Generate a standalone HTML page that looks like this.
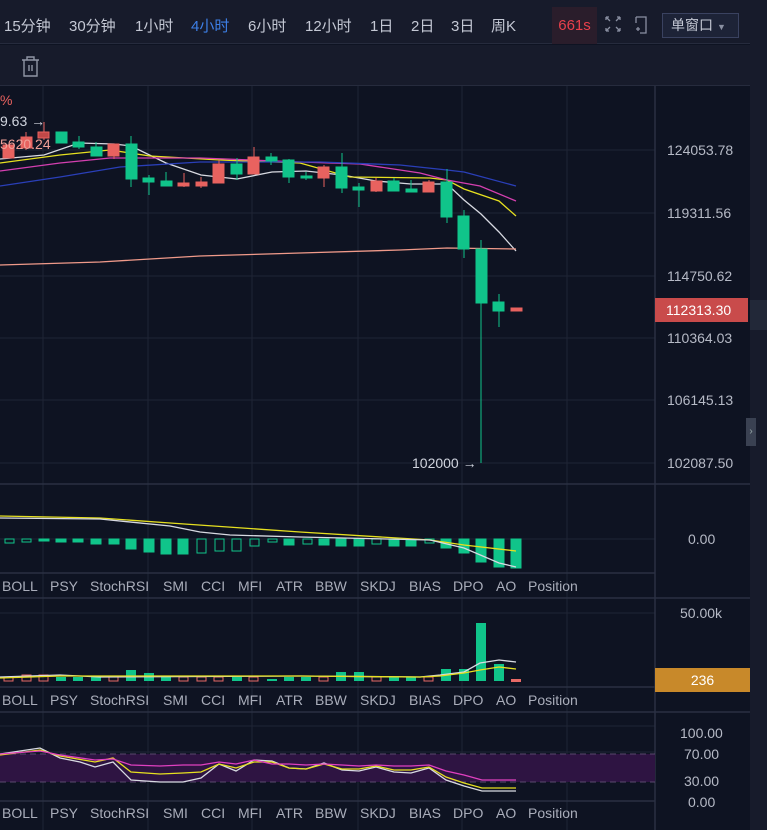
<!DOCTYPE html>
<html><head><meta charset="utf-8"><style>
*{margin:0;padding:0;box-sizing:border-box}
body{width:767px;height:830px;overflow:hidden;background:#0e1322;font-family:"Liberation Sans","Noto Sans CJK SC",sans-serif;position:relative}
.bar{position:absolute;left:0;width:750px;background:#171b2b}
.t{position:absolute;top:15px;font-size:15px;color:#c4c8d4;white-space:nowrap}
.ax{position:absolute;font-size:14px;color:#b6bac6;white-space:nowrap}
.lb{position:absolute;left:0;width:600px;height:20px;font-size:14px;color:#a9adba;white-space:nowrap}
.lb span{position:absolute;top:0}
</style></head><body>
<div class="bar" style="top:0;height:44px;border-bottom:1px solid #262b3d"></div>
<div class="bar" style="top:45px;height:41px;border-bottom:1px solid #262b3d"></div>
<div style="position:absolute;left:750px;top:0;width:17px;height:830px;background:#171b2b"></div>
<div style="position:absolute;left:750px;top:300px;width:17px;height:30px;background:#222838"></div>
<div style="position:absolute;left:746px;top:418px;width:10px;height:28px;background:#3a4152;color:#9aa;font-size:10px;line-height:28px;text-align:center">›</div>
<div class="t" style="left:4px">15分钟</div>
<div class="t" style="left:69px">30分钟</div>
<div class="t" style="left:135px">1小时</div>
<div class="t" style="left:191px;color:#3d7fe6">4小时</div>
<div class="t" style="left:248px">6小时</div>
<div class="t" style="left:305px">12小时</div>
<div class="t" style="left:370px">1日</div>
<div class="t" style="left:411px">2日</div>
<div class="t" style="left:451px">3日</div>
<div class="t" style="left:491px">周K</div>
<div style="position:absolute;left:552px;top:7px;width:45px;height:37px;background:#2a1d2b;color:#e8404c;font-size:15px;line-height:37px;text-align:center">661s</div>
<svg style="position:absolute;left:604px;top:15px" width="50" height="20" fill="none" stroke="#8a90a2" stroke-width="1.3">
<path d="M2 2l4 4M2 2h3M2 2v3M16 2l-4 4M16 2h-3M16 2v3M2 16l4-4M2 16h3M2 16v-3M16 16l-4-4M16 16h-3M16 16v-3"/>
<path d="M32 2h10v16h-6M32 2v6M32 14h4M34 12v4"/>
</svg>
<div style="position:absolute;left:662px;top:13px;width:77px;height:25px;border:1px solid #3a4260;background:#1d2337;color:#c4c8d4;font-size:14px;line-height:23px;padding-left:8px">单窗口<span style="font-size:9px;color:#8a90a2;margin-left:4px">▼</span></div>
<svg style="position:absolute;left:20px;top:55px" width="22" height="24" fill="none" stroke="#9096a6" stroke-width="1.4"><path d="M2 5h17M7 5V2h7v3M4 5v16h13V5M9 10v6M12 10v6"/></svg>

<svg style="position:absolute;left:0;top:86px" width="750" height="744">
<g stroke="#1f2535" stroke-width="1">
<path d="M43 0V744M148 0V744M252 0V744M358 0V744M462 0V744M567 0V744"/>
<path d="M0 64H655M0 127H655M0 190H655M0 252H655M0 314H655M0 377H655"/>
<path d="M0 453H655M0 527H655M0 640H655M0 666H655"/>
</g>
<g stroke="#2a3043" stroke-width="1.5"><path d="M0 398H750M0 487H655M0 512H750M0 601H655M0 626H750M0 715H655M655 0V744"/></g>
<rect x="0" y="668" width="655" height="28" fill="#2e1442"/>
<g stroke="#5a4a6e" stroke-dasharray="6 4"><path d="M0 668H655M0 696H655"/></g>
</svg>

<svg style="position:absolute;left:0;top:0" width="655" height="830">
<g fill="none" stroke-width="1.3">
<polyline stroke="#d8dae2" points="0,159 44,155 79,143 114,144 131,146 166,163 201,175 237,179 272,172 306,171 342,175 376,181 411,184 447,184 464,200 481,214 499,232 516,251"/>
<polyline stroke="#e6e020" points="0,163 60,155 110,150 150,156 220,160 300,163 350,177 430,178 447,180 464,189 499,201 516,216"/>
<polyline stroke="#d43fb0" points="0,171 60,163 110,158 200,158 300,162 360,164 420,173 447,180 480,186 516,201"/>
<polyline stroke="#2a3fb8" points="0,186 60,177 120,167 200,162 320,162 400,165 447,170 464,172 516,186"/>
<polyline stroke="#f09a8a" points="0,265 100,262 200,256 300,253 400,250 447,248 516,249"/>
</g>
<g fill="#10c48a" stroke="#10c48a">
<rect x="5" y="539" width="9" height="4" fill="none"/><rect x="22" y="539" width="9" height="3" fill="none"/>
<rect x="39" y="539" width="10" height="2"/><rect x="56" y="539" width="10" height="3"/><rect x="73" y="539" width="10" height="3"/><rect x="91" y="539" width="10" height="5"/><rect x="109" y="539" width="10" height="5"/>
<rect x="126" y="539" width="10" height="10"/><rect x="144" y="539" width="10" height="13"/><rect x="161" y="539" width="10" height="15"/><rect x="178" y="539" width="10" height="15"/>
<rect x="197" y="539" width="9" height="14" fill="none"/><rect x="215" y="539" width="9" height="12" fill="none"/><rect x="232" y="539" width="9" height="12" fill="none"/><rect x="250" y="539" width="9" height="7" fill="none"/><rect x="268" y="539" width="9" height="3" fill="none"/>
<rect x="284" y="539" width="10" height="6"/><rect x="303" y="539" width="9" height="5" fill="none"/><rect x="319" y="539" width="10" height="6"/><rect x="336" y="539" width="10" height="7"/><rect x="354" y="539" width="10" height="7"/>
<rect x="372" y="539" width="9" height="5" fill="none"/><rect x="389" y="539" width="10" height="7"/><rect x="406" y="539" width="10" height="7"/><rect x="425" y="539" width="9" height="4" fill="none"/>
<rect x="441" y="539" width="10" height="9"/><rect x="459" y="539" width="10" height="14"/><rect x="476" y="539" width="10" height="23"/><rect x="494" y="539" width="10" height="28"/><rect x="511" y="539" width="10" height="29"/>
</g>
<g fill="none" stroke-width="1.3">
<polyline stroke="#e6e020" points="0,516 100,518 170,523 300,532 430,540 464,545 516,551"/>
<polyline stroke="#d8dae2" points="0,518 100,519 170,526 200,532 230,535 300,537 430,540 464,548 499,563 516,567"/>
</g>
<g fill="#10c48a">
<rect x="56" y="677" width="10" height="4"/><rect x="73" y="677" width="10" height="4"/><rect x="91" y="677" width="10" height="4"/>
<rect x="126" y="670" width="10" height="11"/><rect x="144" y="673" width="10" height="8"/><rect x="161" y="676" width="10" height="5"/>
<rect x="232" y="677" width="10" height="4"/><rect x="267" y="679" width="10" height="2"/><rect x="284" y="677" width="10" height="4"/><rect x="301" y="677" width="10" height="4"/>
<rect x="336" y="672" width="10" height="9"/><rect x="354" y="672" width="10" height="9"/><rect x="389" y="677" width="10" height="4"/><rect x="406" y="677" width="10" height="4"/>
<rect x="441" y="669" width="10" height="12"/><rect x="459" y="669" width="10" height="12"/><rect x="476" y="623" width="10" height="58"/><rect x="494" y="664" width="10" height="17"/>
</g>
<g fill="none" stroke="#e86a66"><rect x="4" y="677" width="9" height="4"/><rect x="22" y="675" width="9" height="6"/><rect x="39" y="675" width="9" height="6"/><rect x="109" y="677" width="9" height="4"/><rect x="179" y="677" width="9" height="4"/><rect x="197" y="677" width="9" height="4"/><rect x="214" y="677" width="9" height="4"/><rect x="249" y="677" width="9" height="4"/><rect x="319" y="677" width="9" height="4"/><rect x="372" y="677" width="9" height="4"/><rect x="424" y="677" width="9" height="4"/></g>
<rect x="511" y="679" width="10" height="3" fill="#e86a66"/>
<g fill="none" stroke-width="1.3">
<polyline stroke="#d8dae2" points="0,677 60,675 100,677 300,676 420,677 440,675 464,672 480,663 499,660 516,662"/>
<polyline stroke="#e6e020" points="0,678 60,676 150,676 300,676 420,677 440,676 464,673 480,670 499,667 516,669"/>
</g>
<g fill="none" stroke-width="1.3">
<polyline stroke="#d8dae2" points="0,754 20,751 40,748 60,758 80,762 95,767 113,762 131,780 160,782 183,782 201,778 219,764 236,771 254,760 272,761 289,768 306,769 324,763 342,770 359,771 376,767 394,772 411,773 429,768 446,780 464,786 482,791 516,791"/>
<polyline stroke="#e6e020" points="0,755 40,750 60,756 95,762 113,758 131,772 160,774 183,773 201,772 219,764 236,768 254,762 272,762 289,768 306,769 324,764 342,769 359,769 376,766 394,770 411,770 429,767 446,777 464,783 482,788 516,788"/>
<polyline stroke="#e040c0" points="0,754 40,751 60,755 95,760 113,759 131,765 160,766 183,765 201,765 219,762 236,764 254,760 272,764 289,764 306,765 324,764 342,765 359,766 376,765 394,766 411,766 429,765 446,771 464,775 482,780 516,780"/>
</g>
</svg>
<svg style="position:absolute;left:0;top:0" width="655" height="484">
<g stroke-width="1">
<g stroke="#e8625f" fill="#e8625f">
<rect x="3" y="145" width="11" height="13"/><line x1="26" y1="132" x2="26" y2="150"/><rect x="21" y="137" width="11" height="11"/>
<line x1="44" y1="122" x2="44" y2="140"/><rect x="38" y="132" width="11" height="6" fill="#c04848"/>
<line x1="114" y1="144" x2="114" y2="159"/><rect x="108" y="144" width="11" height="12"/>
<line x1="184" y1="173" x2="184" y2="187"/><rect x="178" y="183" width="11" height="3"/>
<line x1="201" y1="177" x2="201" y2="188"/><rect x="196" y="182" width="11" height="4"/>
<line x1="219" y1="160" x2="219" y2="183"/><rect x="213" y="164" width="11" height="19"/>
<line x1="254" y1="147" x2="254" y2="174"/><rect x="248" y="157" width="11" height="17"/>
<line x1="324" y1="165" x2="324" y2="187"/><rect x="318" y="167" width="11" height="11"/>
<line x1="376" y1="178" x2="376" y2="192"/><rect x="371" y="181" width="11" height="10"/>
<line x1="429" y1="180" x2="429" y2="192"/><rect x="423" y="182" width="11" height="10"/>
<rect x="511" y="308" width="11" height="3"/>
</g>
<g stroke="#10c48a" fill="#10c48a">
<rect x="56" y="132" width="11" height="11"/>
<line x1="79" y1="136" x2="79" y2="149"/><rect x="73" y="142" width="11" height="5"/>
<line x1="96" y1="142" x2="96" y2="156"/><rect x="91" y="147" width="11" height="9"/>
<line x1="131" y1="136" x2="131" y2="187"/><rect x="126" y="144" width="11" height="35"/>
<line x1="149" y1="175" x2="149" y2="195"/><rect x="143" y="178" width="11" height="4"/>
<line x1="166" y1="172" x2="166" y2="186"/><rect x="161" y="181" width="11" height="5"/>
<line x1="237" y1="158" x2="237" y2="180"/><rect x="231" y="164" width="11" height="10"/>
<line x1="271" y1="153" x2="271" y2="165"/><rect x="266" y="157" width="11" height="4"/>
<line x1="289" y1="159" x2="289" y2="183"/><rect x="283" y="160" width="11" height="17"/>
<line x1="306" y1="172" x2="306" y2="180"/><rect x="301" y="176" width="11" height="2"/>
<line x1="342" y1="153" x2="342" y2="193"/><rect x="336" y="167" width="11" height="21"/>
<line x1="359" y1="183" x2="359" y2="207"/><rect x="353" y="187" width="11" height="3"/>
<line x1="394" y1="178" x2="394" y2="191"/><rect x="388" y="181" width="11" height="10"/>
<line x1="411" y1="180" x2="411" y2="192"/><rect x="406" y="189" width="11" height="3"/>
<line x1="447" y1="169" x2="447" y2="223"/><rect x="441" y="182" width="11" height="35"/>
<line x1="464" y1="210" x2="464" y2="258"/><rect x="458" y="216" width="11" height="33"/>
<line x1="481" y1="240" x2="481" y2="463"/><rect x="476" y="249" width="11" height="54"/>
<line x1="499" y1="294" x2="499" y2="327"/><rect x="493" y="302" width="11" height="9"/>
</g>
</g>
</svg>
<div class="ax" style="left:0;top:92px;color:#e8625f">%</div>
<div class="ax" style="left:0;top:113px;color:#d0d4de">9.63 →</div>
<div class="ax" style="left:0;top:136px;color:#f0a098">5620.24</div>
<div class="ax" style="left:412px;top:455px;color:#d0d4de">102000 →</div>
<div class="ax" style="left:667px;top:142px">124053.78</div>
<div class="ax" style="left:667px;top:205px">119311.56</div>
<div class="ax" style="left:667px;top:268px">114750.62</div>
<div class="ax" style="left:667px;top:330px">110364.03</div>
<div class="ax" style="left:667px;top:392px">106145.13</div>
<div class="ax" style="left:667px;top:455px">102087.50</div>
<div style="position:absolute;left:655px;top:298px;width:93px;height:24px;background:#c94b4b;color:#fff;font-size:14px;line-height:24px;padding-left:11px">112313.30</div>
<div class="ax" style="left:688px;top:531px">0.00</div>
<div class="ax" style="left:680px;top:605px">50.00k</div>
<div style="position:absolute;left:655px;top:668px;width:95px;height:24px;background:#c8892a;color:#fff;font-size:14px;line-height:24px;text-align:center">236</div>
<div class="ax" style="left:680px;top:725px">100.00</div>
<div class="ax" style="left:684px;top:746px">70.00</div>
<div class="ax" style="left:684px;top:773px">30.00</div>
<div class="ax" style="left:688px;top:794px">0.00</div>
<div class="lb" style="top:578px"><span style="left:2px">BOLL</span><span style="left:50px">PSY</span><span style="left:90px">StochRSI</span><span style="left:163px">SMI</span><span style="left:201px">CCI</span><span style="left:238px">MFI</span><span style="left:276px">ATR</span><span style="left:315px">BBW</span><span style="left:360px">SKDJ</span><span style="left:409px">BIAS</span><span style="left:453px">DPO</span><span style="left:496px">AO</span><span style="left:528px">Position</span></div>
<div class="lb" style="top:692px"><span style="left:2px">BOLL</span><span style="left:50px">PSY</span><span style="left:90px">StochRSI</span><span style="left:163px">SMI</span><span style="left:201px">CCI</span><span style="left:238px">MFI</span><span style="left:276px">ATR</span><span style="left:315px">BBW</span><span style="left:360px">SKDJ</span><span style="left:409px">BIAS</span><span style="left:453px">DPO</span><span style="left:496px">AO</span><span style="left:528px">Position</span></div>
<div class="lb" style="top:805px"><span style="left:2px">BOLL</span><span style="left:50px">PSY</span><span style="left:90px">StochRSI</span><span style="left:163px">SMI</span><span style="left:201px">CCI</span><span style="left:238px">MFI</span><span style="left:276px">ATR</span><span style="left:315px">BBW</span><span style="left:360px">SKDJ</span><span style="left:409px">BIAS</span><span style="left:453px">DPO</span><span style="left:496px">AO</span><span style="left:528px">Position</span></div>
</body></html>
